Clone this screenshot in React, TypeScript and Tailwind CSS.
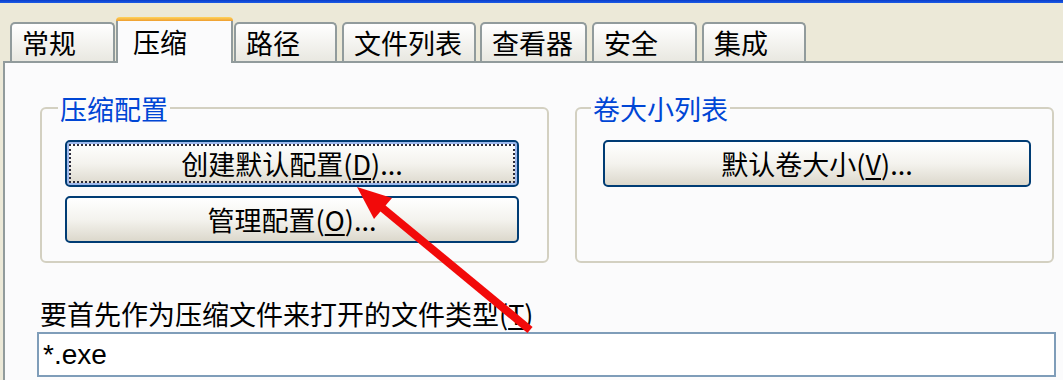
import React from "react"

type TabDef = { label: string; cls: string; active?: boolean }

const tabs: TabDef[] = [
  { label: "常规", cls: "ml-[10px] w-[105px]" },
  { label: "压缩", cls: "ml-px w-[117px]", active: true },
  { label: "路径", cls: "ml-px w-[103px]" },
  { label: "文件列表", cls: "ml-[5px] w-[134px]" },
  { label: "查看器", cls: "ml-[4px] w-[107px]" },
  { label: "安全", cls: "ml-[5px] w-[105px]" },
  { label: "集成", cls: "ml-[5px] w-[104px]" },
]

function Tab({ label, cls, active }: TabDef) {
  if (active) {
    return (
      <div className={`relative z-10 -mb-[2px] flex h-[46px] flex-col ${cls}`}>
        <div className="h-[4px] rounded-t-[5px] bg-linear-to-b from-[#FFD35C] to-[#EE9E2E]" />
        <div className="flex flex-1 items-center border-x-2 border-[#919B9C] bg-[#FBFBFC] pb-[2px] pl-[15px] text-[27px] leading-[27px]">
          {label}
        </div>
      </div>
    )
  }
  return (
    <div
      className={`flex h-[39px] items-center rounded-t-[5px] border-2 border-b-0 border-[#919B9C] bg-linear-to-b from-white to-[#E9E8E1] pb-px pl-[10px] text-[27px] leading-[27px] ${cls}`}
    >
      {label}
    </div>
  )
}

function XpButton({
  children,
  focused,
  className,
}: {
  children: React.ReactNode
  focused?: boolean
  className: string
}) {
  return (
    <button
      className={`flex h-[47px] items-center justify-center rounded-[5px] border-2 border-[#003C74] bg-linear-to-b from-white via-[#F4F3EE] to-[#DCD8CC] text-[27px] leading-[27px] text-black ${
        focused
          ? "shadow-[inset_0_0_0_2px_#9DB8EC] outline-2 outline-dotted outline-[#2b2b3a] outline-offset-[-6px]"
          : ""
      } ${className}`}
    >
      {children}
    </button>
  )
}

export default function App() {
  return (
    <div className="relative h-[380px] w-[1063px] overflow-hidden bg-[#ECE9D8] font-['Noto_Sans_CJK_SC','Noto_Sans',sans-serif] text-black">
      <div className="h-[3px] bg-linear-to-b from-[#0A3DCB] to-[#1C5BE6]" />

      <div className="flex h-[58px] items-end">
        {tabs.map((t) => (
          <Tab key={t.label} {...t} />
        ))}
      </div>

      <div className="ml-[3px] h-[319px] border-l-2 border-t-2 border-[#919B9C] bg-[#FBFBFC] pl-[35px] pt-[44px]">
        <div className="flex gap-[26px]">
          <div className="relative h-[156px] w-[509px] rounded-[6px] border-2 border-[#D3D0C1] pl-[23px] pt-[31px]">
            <span className="absolute -top-[14px] left-[16px] bg-[#FBFBFC] px-[2px] text-[27px] leading-[27px] text-[#0046D5]">
              压缩配置
            </span>
            <div className="flex flex-col gap-[9px]">
              <XpButton focused className="w-[454px]">
                创建默认配置(<span className="underline underline-offset-[3px]">D</span>)...
              </XpButton>
              <XpButton className="w-[454px]">
                管理配置(<span className="underline underline-offset-[3px]">O</span>)...
              </XpButton>
            </div>
          </div>

          <div className="relative h-[156px] w-[479px] rounded-[6px] border-2 border-[#D3D0C1] pl-[26px] pt-[31px]">
            <span className="absolute -top-[14px] left-[14px] bg-[#FBFBFC] px-[2px] text-[27px] leading-[27px] text-[#0046D5]">
              卷大小列表
            </span>
            <XpButton className="w-[428px]">
              默认卷大小(<span className="underline underline-offset-[3px]">V</span>)...
            </XpButton>
          </div>
        </div>

        <div className="mt-[37px] pl-[0px] text-[27px] leading-[27px]">
          要首先作为压缩文件来打开的文件类型(<span className="underline underline-offset-[3px]">T</span>)
        </div>
        <div className="mt-[5px] flex h-[45px] w-[1019px] -ml-[3px] items-center border-2 border-[#7F9DB9] bg-white pl-[4px] font-['Liberation_Sans',Arial,sans-serif] text-[28px]">
          *.exe
        </div>
      </div>

      <svg
        className="pointer-events-none absolute left-0 top-0"
        width="1063"
        height="380"
        viewBox="0 0 1063 380"
      >
        <line x1="380" y1="206" x2="530" y2="330" stroke="#F20A0A" strokeWidth="8" />
        <polygon points="357,187 392,198 374,219" fill="#F20A0A" />
      </svg>
    </div>
  )
}
